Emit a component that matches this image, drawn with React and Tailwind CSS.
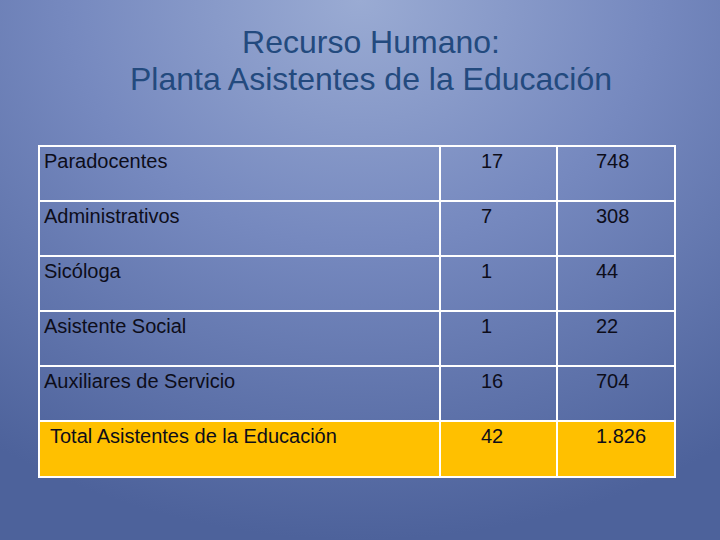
export default function App() {
  const rows = [
    ["Paradocentes", "17", "748"],
    ["Administrativos", "7", "308"],
    ["Sicóloga", "1", "44"],
    ["Asistente Social", "1", "22"],
    ["Auxiliares de Servicio", "16", "704"],
  ];
  return (
    <div className="w-[720px] h-[540px] overflow-hidden bg-[radial-gradient(ellipse_90%_100%_at_50%_0%,#9aabd3_0%,#7689bf_45%,#4d629b_100%)] font-['Liberation_Sans',Arial,sans-serif]">
      <div className="pt-[24px] pl-[22px] h-[145px] text-center text-[32px] leading-[37px] text-[#234a7e]">
        <div>Recurso Humano:</div>
        <div>Planta Asistentes de la Educación</div>
      </div>
      <div className="ml-[38px] w-[638px] border-2 border-white text-[20px] leading-[24px] text-[#0d0d1a]">
        {rows.map((r, i) => (
          <div key={i} className="flex h-[55px] border-b-2 border-white">
            <div className="w-[401px] border-r-2 border-white pl-[4px] pt-[2px]">{r[0]}</div>
            <div className="w-[117px] border-r-2 border-white pl-[40px] pt-[2px]">{r[1]}</div>
            <div className="flex-1 pl-[38px] pt-[2px]">{r[2]}</div>
          </div>
        ))}
        <div className="flex h-[54px] bg-[#ffc000]">
          <div className="w-[401px] border-r-2 border-white pl-[10px] pt-[2px]">Total Asistentes de la Educación</div>
          <div className="w-[117px] border-r-2 border-white pl-[40px] pt-[2px]">42</div>
          <div className="flex-1 pl-[38px] pt-[2px]">1.826</div>
        </div>
      </div>
    </div>
  );
}
